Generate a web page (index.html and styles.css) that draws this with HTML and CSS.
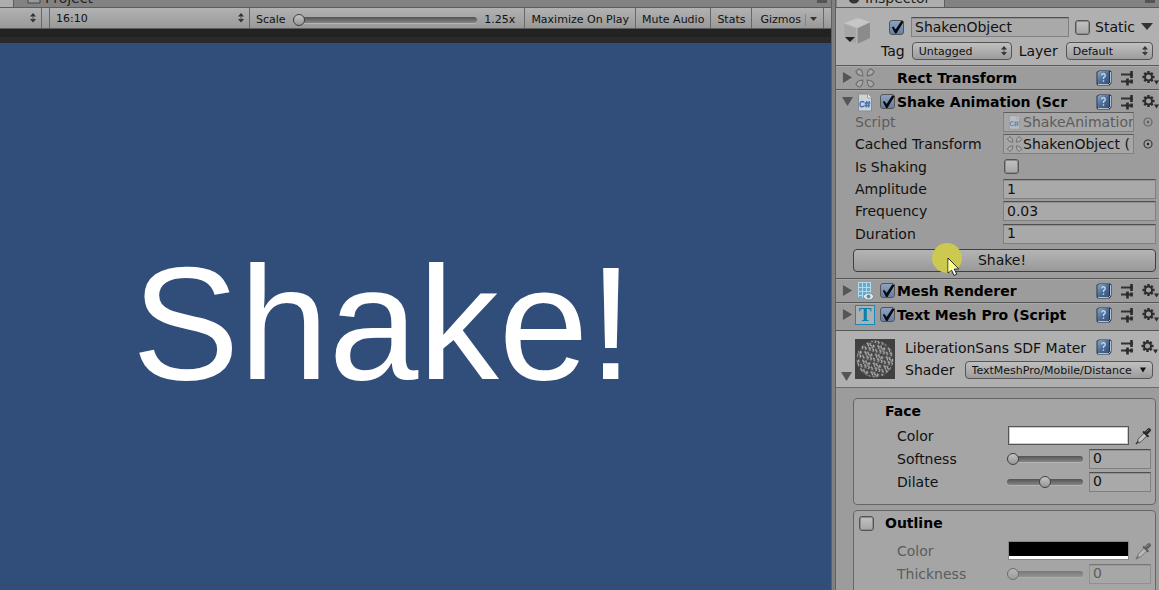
FILE: index.html
```html
<!DOCTYPE html>
<html lang="en">
<head>
<meta charset="utf-8">
<title>Shake Animation</title>
<link rel="stylesheet" href="styles.css">
</head>
<body>
<svg class="defs" aria-hidden="true">
  <defs>
    <linearGradient id="book" x1="0" y1="0" x2="1" y2="1"><stop offset="0" stop-color="#8fabc8"/><stop offset=".5" stop-color="#4c6d97"/><stop offset="1" stop-color="#34517a"/></linearGradient>
    <symbol id="help" viewBox="0 0 16 16"><path d="M.5 2l2.500-1.500h11l1.500 1V13l-2 2.500H1.500L.5 14z" fill="#24344b"/><path d="M1.500 2.500L3.500 1H13v12L11.500 14H1.500z" fill="url(#book)"/><path d="M2 14.500h10.500l2-2V2" fill="none" stroke="#b5c0cd"/><path d="M5.700 5.500Q5.800 3.800 7.500 3.800T9.300 5.500Q9.300 6.600 7.500 7.700V9M7.500 10.300v1.500" fill="none" stroke="#c6d8ec" stroke-width="1.400"/></symbol>
    <symbol id="preset" viewBox="0 0 16 16"><path d="M2 4.500h8M2 11.500h5M10 11.500h4" stroke="#333" stroke-width="1.800" fill="none"/><path d="M12.500 1v7M8.500 8.500v7M12.500 9.500v4" stroke="#2b2b2b" stroke-width="2.600" fill="none"/><path d="M10 4.500h4M6.500 11.500h4" stroke="#2b2b2b" stroke-width="2.200"/></symbol>
    <symbol id="gear" viewBox="0 0 17 16"><g stroke="#2b2b2b" stroke-width="2.400"><path d="M6.500 1v12M.5 7h12M2.300 2.800l8.400 8.400M10.700 2.800l-8.400 8.400"/></g><circle cx="6.500" cy="7" r="4.400" fill="#2b2b2b"/><circle cx="6.500" cy="7" r="2.500" fill="#a2a2a2"/><path d="M12 10.500h5l-2.500 4z" fill="#2b2b2b"/></symbol>
    <symbol id="rect" viewBox="0 0 20 20"><g fill="#aaa" stroke="#717171" stroke-width="1.200"><path id="petal" d="M1 3.500L4 .8Q7.500 1.500 7.800 7.800Q2 7.500 1 3.500z"/><use href="#petal" transform="matrix(-1 0 0 1 20 0)"/><use href="#petal" transform="matrix(1 0 0 -1 0 20)"/><use href="#petal" transform="matrix(-1 0 0 -1 20 20)"/></g></symbol>
    <symbol id="script" viewBox="0 0 20 20"><path d="M3.500 2h9l4 4v13h-13z" fill="#cdd2d8" stroke="#868b91"/><path d="M12.500 2v4h4" fill="#f0f0f0" stroke="#9a9ea3"/><path d="M9 10Q5 8.500 5 12.200T9 14.200M11.700 9l-.7 6.500M14.300 9l-.7 6.500M9.500 11h5.700M9.300 13.500h5.500" fill="none" stroke="#3f72b5" stroke-width="1.400"/></symbol>
    <symbol id="mesh" viewBox="0 0 20 20"><path d="M3 1h13v15l-2 2H5l-2-2z" fill="#65abd0"/><path d="M3.500 1.500h12M3.500 6.500h12M3.500 10.500h12M3.500 14.500h12M7.500 1v16M11.500 1v16M3.500 1v15M15.500 1v14" stroke="#b9d9e8" fill="none"/><ellipse cx="13.500" cy="15.500" rx="5" ry="3.500" fill="#e2ebf0" stroke="#718b99"/><circle cx="13.500" cy="15.500" r="2" fill="#638ba3"/></symbol>
    <symbol id="down" viewBox="0 0 12 12"><path d="M0 1h12L6 11z" fill="currentColor"/></symbol>
    <symbol id="right" viewBox="0 0 12 12"><path d="M1 0l10 6-10 6z" fill="currentColor"/></symbol>
    <symbol id="updown" viewBox="0 0 8 10"><path d="M4 0l3 3.500H1zM4 9.500L1 6h6z" fill="#333"/><path d="M3.500 3h1v4h-1z" fill="#555"/></symbol>
    <symbol id="picker" viewBox="0 0 12 12"><circle cx="6" cy="6" r="4" fill="none" stroke="#3d3d3d" stroke-width="1.200"/><circle cx="6" cy="6" r="1.200" fill="#222"/></symbol>
    <symbol id="dropper" viewBox="0 0 20 20"><path d="M3.500 13.500l7-7 3 3-7 7-3.500 1.500z" fill="#c8c8c8" stroke="#444"/><path d="M9 5l6 6" stroke="#222" stroke-width="2"/><path d="M12.500 6.500l3-3" stroke="#2b2b2b" stroke-width="4.500" stroke-linecap="round"/><path d="M13 5l2-2" stroke="#999" stroke-width="1"/><path d="M1 19l2.500-3" stroke="#333" stroke-width="1.400"/></symbol>
  </defs>
</svg>
<div class="editor">
  <main class="game">
    <div class="tabs">
      <span class="tab tab-stub"></span>
      <span class="tab-idle"><svg width="14" height="12" viewBox="0 0 14 12"><path d="M1 1h5l1 2h6v8H1z" fill="#999" stroke="#444"/></svg>Project</span>
      <span class="tab-menu"></span>
    </div>
    <div class="toolbar">
      <div class="picker display"><select aria-label="Display"><option></option></select><svg><use href="#updown"/></svg></div>
      <div class="spacer"></div>
      <div class="picker aspect"><select aria-label="Aspect ratio"><option>16:10</option></select><svg><use href="#updown"/></svg></div>
      <label class="scale">Scale <input class="slider" type="range" min="0" max="100" value="0"><output>1.25x</output></label>
      <button class="tool">Maximize On Play</button>
      <button class="tool">Mute Audio</button>
      <button class="tool">Stats</button>
      <button class="tool gizmos">Gizmos <svg viewBox="0 0 14 12"><path d="M.5 0v12" stroke="#888"/><path d="M5 3h7L8.500 7z" fill="#333"/></svg></button>
      <div class="rest"></div>
    </div>
    <div class="letterbox"></div>
    <div class="view"><span>Shake!</span></div>
  </main>
  <div class="splitter"></div>
  <aside class="inspector">
    <div class="tabs">
      <span class="tab"><svg width="12" height="12" viewBox="0 0 12 12"><circle cx="6" cy="6" r="5.500" fill="#333"/></svg>Inspector</span>
      <span class="tab-menu lock"></span>
    </div>
    <header class="object">
      <svg class="cube" viewBox="0 0 32 32"><path d="M2 6l14-5 12 4-13 6z" fill="#c6c6c6"/><path d="M2 6l13 5v16L3 22z" fill="#a6a6a6"/><path d="M28 5v16l-13 6V11z" fill="#8b8b8b"/><path d="M2 6l13 5 13-6M15 11v16" fill="none" stroke="#bebebe"/><path d="M3 20h10l-5 5z" fill="#222"/></svg>
      <div class="lines">
        <div class="line">
          <input type="checkbox" class="check" checked aria-label="Active">
          <input type="text" class="text name" value="ShakenObject" aria-label="Name">
          <label class="static"><input type="checkbox" class="check">Static</label>
          <svg class="tri" viewBox="0 0 12 8"><path d="M0 0h12L6 7z" fill="#333"/></svg>
        </div>
        <div class="line second">
          <label for="tag">Tag</label>
          <div class="picker popup"><select id="tag"><option>Untagged</option></select><svg><use href="#updown"/></svg></div>
          <label for="layer">Layer</label>
          <div class="picker popup layer"><select id="layer"><option>Default</option></select><svg><use href="#updown"/></svg></div>
        </div>
      </div>
    </header>

    <section class="component">
      <div class="bar">
        <svg class="fold"><use href="#right"/></svg><svg class="kind"><use href="#rect"/></svg><span class="nocheck"></span>
        <h2>Rect Transform</h2>
        <svg class="act"><use href="#help"/></svg><svg class="act"><use href="#preset"/></svg><svg class="act gear"><use href="#gear"/></svg>
      </div>
    </section>

    <section class="component">
      <div class="bar">
        <svg class="fold"><use href="#down"/></svg><svg class="kind"><use href="#script"/></svg><input type="checkbox" class="check" checked aria-label="Shake Animation enabled">
        <h2>Shake Animation (Scr</h2>
        <svg class="act"><use href="#help"/></svg><svg class="act"><use href="#preset"/></svg><svg class="act gear"><use href="#gear"/></svg>
      </div>
      <div class="fields">
        <div class="field off"><span>Script</span><div class="ref"><svg><use href="#script"/></svg><span>ShakeAnimation</span></div><svg class="target"><use href="#picker"/></svg></div>
        <div class="field"><span>Cached Transform</span><div class="ref"><svg><use href="#rect"/></svg><span>ShakenObject (</span></div><svg class="target"><use href="#picker"/></svg></div>
        <div class="field"><label for="shaking">Is Shaking</label><input id="shaking" type="checkbox" class="check"></div>
        <div class="field"><label for="amp">Amplitude</label><input id="amp" class="text" type="text" value="1"></div>
        <div class="field"><label for="freq">Frequency</label><input id="freq" class="text" type="text" value="0.03"></div>
        <div class="field"><label for="dur">Duration</label><input id="dur" class="text" type="text" value="1"></div>
      </div>
      <div class="action">
        <button class="shake">Shake!</button>
        <svg class="pointer" viewBox="0 0 34 36"><circle cx="15" cy="15" r="15" fill="#cbc94f"/><path d="M16 15v15l3.500-3 2.500 5.500 2.800-1.300-2.600-5.200h4.600z" fill="#fff" stroke="#222"/><path d="M16.500 16.500l8 8.500-3 .2-5 3.800z" fill="#ffff82"/></svg>
      </div>
    </section>

    <section class="component">
      <div class="bar">
        <svg class="fold"><use href="#right"/></svg><svg class="kind"><use href="#mesh"/></svg><input type="checkbox" class="check" checked aria-label="Mesh Renderer enabled">
        <h2>Mesh Renderer</h2>
        <svg class="act"><use href="#help"/></svg><svg class="act"><use href="#preset"/></svg><svg class="act gear"><use href="#gear"/></svg>
      </div>
    </section>

    <section class="component last">
      <div class="bar">
        <svg class="fold"><use href="#right"/></svg><span class="kind tmp">T</span><input type="checkbox" class="check" checked aria-label="Text Mesh Pro enabled">
        <h2>Text Mesh Pro (Script</h2>
        <svg class="act"><use href="#help"/></svg><svg class="act"><use href="#preset"/></svg><svg class="act gear"><use href="#gear"/></svg>
      </div>
    </section>

    <section class="material">
      <svg class="fold"><use href="#down"/></svg>
      <svg class="preview" viewBox="0 0 40 40">
        <defs><pattern id="glyphs" width="11" height="9" patternUnits="userSpaceOnUse" patternTransform="rotate(14)"><path d="M1 1h2v2M5 0v2l2 1M9 1l-1 2h2M0 5l2 1v2M4 5h2v3M8 5l2 1-1 2M3 3l1 1M7 4h1" fill="none" stroke="#d2d2d2" stroke-width="1"/></pattern></defs>
        <path d="M0 0h40v40H0z" fill="#404040"/><circle cx="20" cy="20" r="18.500" fill="#484848"/><circle cx="20" cy="20" r="18.500" fill="url(#glyphs)"/>
      </svg>
      <div class="lines">
        <div class="line title"><h3>LiberationSans SDF Mater</h3><svg class="act"><use href="#help"/></svg><svg class="act"><use href="#preset"/></svg><svg class="act gear"><use href="#gear"/></svg></div>
        <div class="line"><label for="shader">Shader</label><div class="picker popup shader"><select id="shader"><option>TextMeshPro/Mobile/Distance</option></select><svg><use href="#down"/></svg></div></div>
      </div>
    </section>

    <div class="groups">
      <fieldset class="group">
        <h4>Face</h4>
        <div class="prop"><span>Color</span><button class="swatch white" aria-label="Face color"></button><svg class="dropper"><use href="#dropper"/></svg></div>
        <div class="prop"><label for="soft">Softness</label><input id="soft" class="slider" type="range" value="0"><input class="text" type="text" value="0" aria-label="Softness value"></div>
        <div class="prop"><label for="dilate">Dilate</label><input id="dilate" class="slider" type="range" value="50"><input class="text" type="text" value="0" aria-label="Dilate value"></div>
      </fieldset>
      <fieldset class="group">
        <h4 class="toggle"><label><input type="checkbox" class="check">Outline</label></h4>
        <div class="prop off"><span>Color</span><button class="swatch black" aria-label="Outline color"></button><svg class="dropper"><use href="#dropper"/></svg></div>
        <div class="prop off"><label for="thick">Thickness</label><input id="thick" class="slider" type="range" value="0"><input class="text" type="text" value="0" aria-label="Thickness value"></div>
      </fieldset>
    </div>
  </aside>
</div>
</body>
</html>
```
FILE: styles.css
```css
* { box-sizing: border-box; }
body {
  margin: 0;
  background: #828282;
  color: #111;
  font: 14px/18px "DejaVu Sans", sans-serif;
}
button, input, select { font: inherit; color: inherit; margin: 0; border-radius: 0; }
h2, h3, h4 { margin: 0; font-size: 14px; line-height: 18px; white-space: nowrap; }
h2, h4 { color: #000; }
svg { display: block; flex: none; }
.defs { position: absolute; width: 0; height: 0; }

.editor { display: flex; height: 100vh; overflow: hidden; }
.game { flex: 1; min-width: 0; display: flex; flex-direction: column; }
.splitter { width: 5px; flex: none; background: #808080; border: solid #606060; border-width: 0 1px; }
.inspector { width: 323px; flex: none; background: #9c9c9c; overflow: hidden; }

/* Tab strips */
.tabs { display: flex; align-items: flex-end; height: 7px; flex: none; overflow: hidden; background: #828282; }
.tab { display: flex; align-items: center; gap: 5px; padding: 0 14px 0 11px; height: 18px; line-height: 18px; background: #adadad; border-right: 1px solid #5d5d5d; color: #222; }
.tab-stub { width: 14px; padding: 0; }
.tab-idle { display: flex; align-items: center; gap: 4px; margin-left: 13px; height: 18px; color: #222; }
.tab-menu { width: 10px; height: 3px; margin: 0 4px 4px auto; background: #555; }
.inspector .tabs { padding-left: 1px; }

/* Game toolbar */
.toolbar {
  display: flex; flex: none; height: 22px; font-size: 11px; line-height: 14px;
  background: linear-gradient(#b2b2b2, #999); border: solid #5c5c5c; border-width: 1px 0;
}
.picker { position: relative; display: flex; }
.picker select { appearance: none; width: 100%; border: 0; background: none; padding: 1px 6px 0; outline: 0; }
.picker svg { position: absolute; right: 4px; top: 50%; width: 8px; height: 10px; margin-top: -5px; pointer-events: none; }
.toolbar > * { border: 0; border-right: 1px solid #686868; }
.display { width: 42px; }
.spacer { width: 8px; }
.aspect { width: 200px; }
.scale { flex: 1; display: flex; align-items: center; gap: 7px; padding: 4px 9px 0 6px; }
.scale .slider { flex: 1; min-width: 0; }
.tool { background: none; padding: 3px 6px 0; white-space: nowrap; }
.gizmos { display: flex; align-items: center; gap: 4px; padding: 3px 4px 0 8px; }
.gizmos svg { width: 14px; height: 12px; }
.rest { width: 7px; border-right: 0; }
.letterbox { height: 14px; flex: none; background: linear-gradient(#222 8px, #2a2a2a 8px); }
.view {
  flex: 1; display: flex; align-items: center; justify-content: center;
  padding: 12px 66px 0 0; background: #314d79; color: #fff;
  font: 161px/180px "Liberation Sans", sans-serif; overflow: hidden;
}

/* Shared controls */
.check {
  appearance: none; flex: none; display: block; width: 15px; height: 15px;
  border: 1px solid #555; border-radius: 3px; background: linear-gradient(#c2c2c2, #a6a6a6);
  box-shadow: inset 0 0 0 1px #8c8c8c;
}
.check:checked { background: linear-gradient(#8ca2c0, #6480a8); box-shadow: none; }
.check:checked::before {
  content: ""; display: block; width: 14px; height: 14px; background: #0a0a0a;
  clip-path: polygon(12% 46%, 26% 44%, 40% 64%, 80% 4%, 98% 8%, 46% 92%, 36% 92%);
}
.text {
  min-width: 0; height: 20px; padding: 0 3px 1px; outline: 0; background: #a9a9a9;
  border: 1px solid #808080; border-top-color: #4f4f4f; box-shadow: inset 0 1px #909090;
}
.slider { appearance: none; min-width: 0; height: 14px; background: none; }
.slider::-webkit-slider-runnable-track {
  height: 6px; border-radius: 3px;
  background: linear-gradient(#545454, #858585); box-shadow: 0 1px #b5b5b5;
}
.slider::-webkit-slider-thumb {
  appearance: none; width: 12px; height: 12px; margin-top: -3px; border-radius: 50%;
  border: 1px solid #414141; background: linear-gradient(#c4c4c4, #969696);
}
.popup select {
  height: 18px; border: 1px solid #555; border-radius: 4px; font-size: 11px; line-height: 14px;
  background: linear-gradient(#c0c0c0, #9c9c9c);
}
.off { color: #5c5c5c; }
.off svg, .off .slider, .off .text { opacity: .55; }
.off .text { color: #222; }

/* Object header */
.object { display: flex; gap: 7px; padding: 9px 6px 5px 6px; background: #b0b0b0; border: solid #5a5a5a; border-width: 1px 0; }
.cube { width: 32px; height: 32px; }
.lines { flex: 1; min-width: 0; }
.line { display: flex; align-items: center; }
.object .check { margin-left: 8px; }
.name { width: 158px; margin-left: 7px; }
.static { display: flex; align-items: center; gap: 5px; }
.object .static .check { margin-left: 6px; }
.tri { width: 12px; height: 8px; margin-left: auto; }
.second { margin-top: 5px; gap: 7px; }
.object .popup { width: 100px; }
.object .layer { flex: 1; margin-left: 1px; }

/* Components */
.component { border-bottom: 1px solid #565656; box-shadow: inset 0 1px #a9a9a9; }
.bar { display: flex; align-items: center; height: 23px; padding-left: 6px; }
.fold { width: 11px; height: 11px; color: #555; }
.kind { width: 20px; height: 20px; margin: 0 5px 0 2px; }
.tmp { flex: none; border: 1px solid #168bb8; background: #aab0b3; color: #0880b0; font: bold 19px/18px "Liberation Serif", serif; text-align: center; }
.nocheck { width: 15px; }
.bar h2 { flex: 1; margin-left: 2px; overflow: hidden; }
.act { width: 16px; height: 16px; margin-right: 7px; }
.act.gear { width: 17px; margin: 0; }
.last { padding-bottom: 4px; }

.fields { display: grid; grid-auto-rows: 1fr; height: 134px; margin-top: -2px; padding: 0 3px 0 19px; }
.field { display: grid; grid-template-columns: 148px 1fr; align-items: center; }
.field:has(.ref) { grid-template-columns: 148px 131px 1fr; }
.field .check { margin-left: 1px; }
.ref { display: flex; align-items: center; height: 20px; padding-left: 2px; overflow: hidden; white-space: nowrap; background: #a6a6a6; border: 1px solid #808080; border-top-color: #5c5c5c; }
.ref svg { width: 17px; height: 16px; }
.target { width: 12px; height: 12px; justify-self: end; margin-right: 2px; }
.action { position: relative; padding: 4px 3px 6px 17px; }
.shake { display: block; width: 100%; height: 23px; padding: 0 5px 2px 0; border: 1px solid #3f3f3f; border-radius: 4px; background: linear-gradient(#b4b4b4, #999); }
.pointer { position: absolute; left: 96px; top: -2px; width: 34px; height: 36px; }

/* Material header */
.material { display: flex; align-items: flex-end; padding: 6px 0 8px 5px; background: #b0b0b0; border-bottom: 1px solid #6a6a6a; }
.material .fold { margin-bottom: -3px; }
.preview { width: 40px; height: 40px; margin: 0 10px 0 3px; }
.title { height: 22px; margin-bottom: 2px; }
.title h3 { flex: 1; min-width: 0; font-weight: 400; }
.material .act { margin-bottom: 2px; }
.material .gear { margin-left: -2px; width: 19px; }
.shader { flex: 1; margin: 0 6px 0 10px; }
.shader svg { width: 6px; height: 6px; margin-top: -3px; right: 7px; }
.shader select { text-overflow: clip; }

/* Property groups */
.groups { display: grid; grid-template-columns: minmax(0, 1fr); gap: 5px; padding: 10px 3px 0 17px; }
.group { min-width: 0; margin: 0; padding: 3px 4px 11px 5px; border: 1px solid #666; border-radius: 4px; background: #a5a5a5; }
.group h4 { padding-left: 26px; margin-bottom: 4px; }
.group .toggle { margin-bottom: 7px; }
.group h4 label { display: flex; align-items: center; gap: 11px; margin-left: -26px; }
.prop { display: grid; grid-template-columns: 105px 75px 62px; gap: 0 6px; align-items: center; height: 23px; padding-left: 38px; }
.prop:has(.swatch) { grid-template-columns: 105px 121px 20px; column-gap: 6px; }
.prop .dropper { width: 18px; height: 20px; }
.prop .slider { margin-left: -1px; }
.swatch { height: 19px; padding: 0; border: 1px solid #555; box-shadow: inset 0 0 0 1px #ccc; }
.white { background: #fff; }
.black { background: linear-gradient(#000 14px, #fff 14px); box-shadow: none; border-color: #888; }
```
